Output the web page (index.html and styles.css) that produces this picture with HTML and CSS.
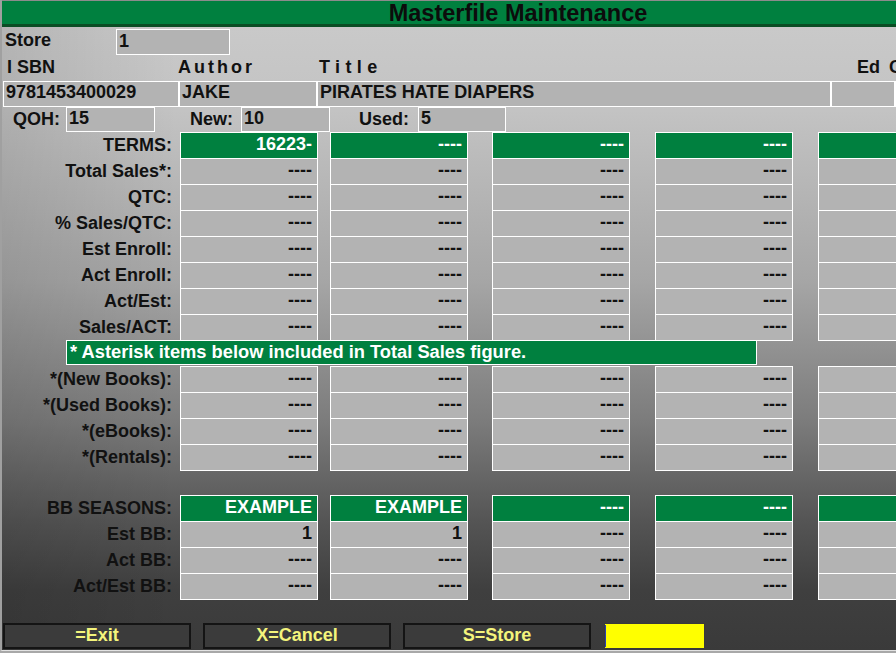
FILE: index.html
```html
<!DOCTYPE html>
<html>
<head>
<meta charset="utf-8">
<link rel="stylesheet" href="styles.css">
</head>
<body>
<div class="win">
  <div class="titlebar">Masterfile Maintenance</div>

  <div class="store-row">
    <span class="lbl store-lbl">Store</span>
    <span class="field store-field">1</span>
  </div>

  <div class="head-row">
    <span class="h h-isbn">I SBN</span>
    <span class="h h-author">Author</span>
    <span class="h h-title">Title</span>
    <span class="h h-ed">Ed C</span>
  </div>

  <div class="val-row">
    <span class="field f-isbn">9781453400029</span>
    <span class="field f-author">JAKE</span>
    <span class="field f-title">PIRATES HATE DIAPERS</span>
    <span class="field f-ed"></span>
    <span class="field f-more"></span>
  </div>

  <div class="qoh-row">
    <span class="lbl q-lbl">QOH:</span>
    <span class="field q-field">15</span>
    <span class="lbl new-lbl">New:</span>
    <span class="field q-field">10</span>
    <span class="lbl used-lbl">Used:</span>
    <span class="field q-field used-field">5</span>
  </div>

  <div class="grid">
    <div class="rl">TERMS:</div>
    <div class="c g">16223-</div><div class="c g">----</div><div class="c g">----</div><div class="c g">----</div><div class="c g">----</div>

    <div class="rl">Total Sales*:</div>
    <div class="c">----</div><div class="c">----</div><div class="c">----</div><div class="c">----</div><div class="c">----</div>

    <div class="rl">QTC:</div>
    <div class="c">----</div><div class="c">----</div><div class="c">----</div><div class="c">----</div><div class="c">----</div>

    <div class="rl">% Sales/QTC:</div>
    <div class="c">----</div><div class="c">----</div><div class="c">----</div><div class="c">----</div><div class="c">----</div>

    <div class="rl">Est Enroll:</div>
    <div class="c">----</div><div class="c">----</div><div class="c">----</div><div class="c">----</div><div class="c">----</div>

    <div class="rl">Act Enroll:</div>
    <div class="c">----</div><div class="c">----</div><div class="c">----</div><div class="c">----</div><div class="c">----</div>

    <div class="rl">Act/Est:</div>
    <div class="c">----</div><div class="c">----</div><div class="c">----</div><div class="c">----</div><div class="c">----</div>

    <div class="rl">Sales/ACT:</div>
    <div class="c">----</div><div class="c">----</div><div class="c">----</div><div class="c">----</div><div class="c">----</div>

    <div class="note-row"><div class="note">* Asterisk items below included in Total Sales figure.</div></div>

    <div class="rl">*(New Books):</div>
    <div class="c">----</div><div class="c">----</div><div class="c">----</div><div class="c">----</div><div class="c">----</div>

    <div class="rl">*(Used Books):</div>
    <div class="c">----</div><div class="c">----</div><div class="c">----</div><div class="c">----</div><div class="c">----</div>

    <div class="rl">*(eBooks):</div>
    <div class="c">----</div><div class="c">----</div><div class="c">----</div><div class="c">----</div><div class="c">----</div>

    <div class="rl">*(Rentals):</div>
    <div class="c">----</div><div class="c">----</div><div class="c">----</div><div class="c">----</div><div class="c">----</div>

    <div class="spacer"></div>

    <div class="rl">BB SEASONS:</div>
    <div class="c g">EXAMPLE</div><div class="c g">EXAMPLE</div><div class="c g">----</div><div class="c g">----</div><div class="c g">----</div>

    <div class="rl">Est BB:</div>
    <div class="c">1</div><div class="c">1</div><div class="c">----</div><div class="c">----</div><div class="c">----</div>

    <div class="rl">Act BB:</div>
    <div class="c">----</div><div class="c">----</div><div class="c">----</div><div class="c">----</div><div class="c">----</div>

    <div class="rl">Act/Est BB:</div>
    <div class="c">----</div><div class="c">----</div><div class="c">----</div><div class="c">----</div><div class="c">----</div>
  </div>

  <div class="footer">
    <div class="btn">=Exit</div>
    <div class="btn">X=Cancel</div>
    <div class="btn">S=Store</div>
    <div class="entry"><span class="caret"></span></div>
  </div>
</div>
</body>
</html>
```

FILE: styles.css
```css
* {
  box-sizing: border-box;
  margin: 0;
  padding: 0;
}

html, body {
  width: 896px;
  height: 653px;
  overflow: hidden;
}

body {
  background: #a8a8a8;
  font-family: "Liberation Sans", Arial, sans-serif;
  font-weight: bold;
  font-size: 18px;
  color: #111;
}

.win {
  width: 1034px;
  height: 651px;
  border-left: 2px solid #a0a0a0;
  border-bottom: 1px solid #e2e2e2;
  overflow: hidden;
  display: flex;
  flex-direction: column;
  background:
    linear-gradient(to right, rgba(0, 0, 0, 0.1), rgba(0, 0, 0, 0) 175px),
    linear-gradient(to bottom, #cbcbcb 0, #c3c3c3 110px, #a6a6a6 280px, #7c7c7c 420px, #555 520px, #3f3f3f 590px, #3a3a3a 650px);
}

/* title */
.titlebar {
  height: 27px;
  flex: none;
  background: #00803f;
  border-top: 1px solid #8c8c8c;
  border-bottom: 3px solid #0a4d24;
  text-align: center;
  font-size: 23.5px;
  line-height: 23px;
  padding-top: 1px;
  color: #0c0c0c;
}

.field {
  display: block;
  background: #b3b3b3;
  border: 1px solid #fff;
  white-space: nowrap;
  overflow: hidden;
  padding-left: 2px;
}

.lbl {
  display: block;
  white-space: nowrap;
}

/* store */
.store-row {
  height: 28px;
  flex: none;
  display: flex;
  align-items: flex-start;
}
.store-lbl {
  width: 114px;
  padding-left: 3px;
  line-height: 27px;
}
.store-field {
  margin-top: 2px;
  width: 114px;
  height: 26px;
  line-height: 22px;
}

/* heading labels */
.head-row {
  height: 26px;
  flex: none;
  display: flex;
  line-height: 25px;
  white-space: nowrap;
}
.h { display: block; }
.h-isbn { margin-left: 5px; width: 171px; }
.h-author { width: 141px; letter-spacing: 3px; }
.h-title { width: 538px; letter-spacing: 5.4px; }
.h-ed { word-spacing: 4px; }

/* value row */
.val-row {
  height: 26px;
  flex: none;
  display: flex;
}
.val-row .field {
  height: 26px;
  line-height: 21px;
}
.f-isbn { margin-left: 1px; width: 176px; }
.f-author { width: 138px; }
.f-title { width: 514px; }
.f-ed { width: 64px; }
.f-more { width: 100px; }

/* qoh row */
.qoh-row {
  height: 25px;
  flex: none;
  display: flex;
  align-items: flex-start;
}
.qoh-row .lbl { line-height: 24px; }
.q-lbl { margin-left: 11px; width: 53px; }
.new-lbl { margin-left: 35px; width: 51px; }
.used-lbl { margin-left: 29px; width: 59px; }
.q-field {
  width: 89px;
  height: 25px;
  line-height: 21px;
}
.used-field { width: 88px; }

/* main grid */
.grid {
  flex: none;
  display: grid;
  grid-template-columns: 178px 150px 162px 163px 163px 138px;
  grid-template-rows: repeat(13, 26px) 25px repeat(4, 26px);
}
.rl {
  text-align: right;
  padding-right: 8px;
  font-size: 18px;
  line-height: 26px;
  white-space: nowrap;
}
.c {
  width: 138px;
  height: 27px;
  background: #b3b3b3;
  border: 1px solid #fff;
  text-align: right;
  padding-right: 5px;
  line-height: 23px;
  white-space: nowrap;
  overflow: hidden;
}
.c.g {
  background: #00803f;
  color: #fff;
}
.note-row {
  grid-column: 1 / -1;
}
.note {
  margin-left: 64px;
  width: 691px;
  height: 25px;
  background: #00803f;
  border: 1px solid #fff;
  color: #fff;
  padding-left: 3px;
  font-size: 18.3px;
  line-height: 22px;
  white-space: nowrap;
}
.spacer {
  grid-column: 1 / -1;
}

/* footer */
.footer {
  flex: none;
  margin-top: 24px;
  display: flex;
  gap: 12px;
  padding-left: 1px;
}
.btn {
  width: 188px;
  height: 26px;
  background: #3b3b3b;
  border: 2px solid #141414;
  color: #f4f47c;
  text-align: center;
  line-height: 21px;
}
.entry {
  margin-left: 1px;
  width: 101px;
  height: 26px;
  background: #ffff00;
  border: 1px solid #3a3a3a;
  display: flex;
  align-items: center;
}
.caret {
  display: block;
  width: 1px;
  height: 22px;
  background: #2a3fb0;
}
```
